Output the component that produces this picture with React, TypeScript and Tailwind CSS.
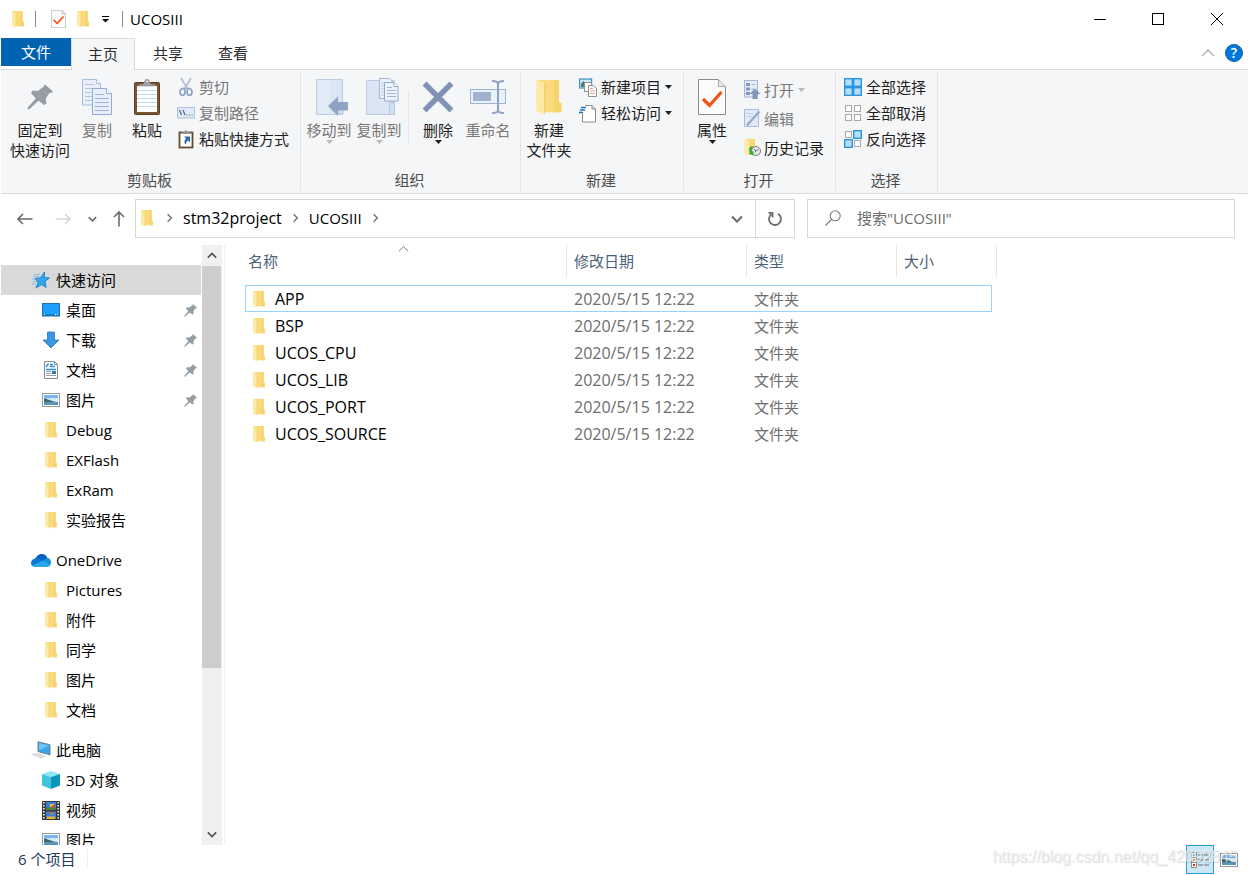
import React from "react";

type IconProps = { className?: string };

/* ---------- icons ---------- */

const FolderIcon = ({ className = "w-4 h-[18px]" }: IconProps) => (
  <svg viewBox="0 0 16 18" preserveAspectRatio="none" className={className}>
    <path d="M2.500 1h10.100v10.200l1.200.8v4.200H5z" fill="#f9da7c" />
    <path d="M10.500 1h2.100v10.200l1.200.8v4.200h-3.300z" fill="#f6d26a" />
    <path d="M2 1l3.800 1.400V17.600L2 15.400z" fill="#ffe9a6" />
    <path d="M5.800 2.400h.4v14l-.4 1.200z" fill="#ecc565" />
  </svg>
);

const PinIcon = ({ className = "w-[13px] h-[13px]" }: IconProps) => (
  <svg viewBox="0 0 26 26" className={className} fill="#939ea5">
    <path d="M17.500 0L26 7.500l-2 1.600-1.400-.3-3.800 5.600.7 5.200-2.400 1.500-5.600-4.300L2 25.500.4 25l.3-1.600 8-9L4 9l1.500-2.400 5.200.4L17 2.500z" />
  </svg>
);

const CopyIcon = () => (
  <svg viewBox="0 0 32 38" className="w-8 h-[38px]">
    <path d="M1.500 1.500h14l4 4v21.500h-18z" fill="#e8effa" stroke="#a9bbda" />
    <path d="M15.500 1.500v4h4" fill="#fff" stroke="#a9bbda" />
    <path d="M4 6.500h9M4 10.500h13M4 14.500h7M4 18.500h7M4 22.500h7" stroke="#b6c5de" />
    <path d="M11.500 10.500h14l5 5v21h-19z" fill="#e6eefa" stroke="#93a9cf" />
    <path d="M25.500 10.500v5h5" fill="#fff" stroke="#93a9cf" />
    <path d="M14 16.500h9M14 20.500h14M14 24.500h14M14 28.500h14M14 32.500h14" stroke="#a3b5d4" />
  </svg>
);

const PasteIcon = () => (
  <svg viewBox="0 0 28 38" className="w-7 h-[38px]">
    <rect x="1.500" y="4.500" width="25" height="32" rx="1" fill="#7b5533" stroke="#5b3e26" />
    <rect x="4" y="8" width="20" height="26" fill="#fff" />
    <path d="M4 12.500h20M4 16.500h20M4 20.500h20M4 24.500h20M4 28.500h20" stroke="#bcdcf0" />
    <path d="M6 8V6.500h4l1.500-2.500h5L18 6.500h4V8z" fill="#a5a9ad" stroke="#7f8488" strokeWidth="0.6" />
    <circle cx="14" cy="3.500" r="2.500" fill="#94989c" />
    <circle cx="14" cy="3.500" r="0.9" fill="#fff" />
  </svg>
);

const CutIcon = () => (
  <svg viewBox="0 0 18 20" className="w-[18px] h-5" fill="none">
    <path d="M4 1l6.500 11M14 1L7.500 12" stroke="#b5c0d2" strokeWidth="1.8" />
    <path d="M7.500 11.500c-2-.5-4.500.8-4.500 3.500 0 2 1 3.300 2.600 3.300S8 17 8 15zM10.500 11.500c2-.5 4.500.8 4.500 3.500 0 2-1 3.300-2.600 3.300S10 17 10 15z" stroke="#93a6c6" strokeWidth="1.8" />
  </svg>
);

const CopyPathIcon = () => (
  <svg viewBox="0 0 18 12" className="w-[18px] h-3">
    <rect x="0.500" y="0.500" width="17" height="10.500" fill="#dfe9f7" stroke="#b0c2de" />
    <path d="M2.500 3l2 5M6 3l2 5" stroke="#51678f" strokeWidth="1.200" />
    <path d="M9.500 8h1M12 8h1M14.500 8h1" stroke="#51678f" strokeWidth="1.200" />
  </svg>
);

const PasteShortcutIcon = () => (
  <svg viewBox="0 0 18 20" className="w-[18px] h-5">
    <rect x="2.500" y="3.500" width="13" height="15" fill="#fff" stroke="#6b4a2c" strokeWidth="1.800" />
    <path d="M5 5V3h2.500l.5-1.500h2L10.500 3H13v2z" fill="#8f9398" />
    <path d="M7 7.500h6v6l-2-2c-1.600 1-2 2-1.800 4C7 14.500 6.800 12 9 9.500z" fill="#2d69ac" />
  </svg>
);

const MoveToIcon = () => (
  <svg viewBox="-6 0 40 38" className="w-10 h-[38px]">
    <path d="M1.500 1.500h26v35h-26z" fill="#dbe5f4" stroke="#bccbe3" />
    <path d="M2 2h13v34H2z" fill="#e3ebf7" />
    <path d="M24 25.500h4V36h-4z" fill="#d0def0" stroke="#b8c9e2" />
    <path d="M13 28l10-9.500V24h10v8.500H23V38z" fill="#8fa3c5" />
  </svg>
);

const CopyToIcon = () => (
  <svg viewBox="-6 0 40 38" className="w-10 h-[38px]">
    <path d="M1.500 2.500h28v34h-28z" fill="#dbe5f4" stroke="#bccbe3" />
    <path d="M24.500 24.500h5v12h-5z" fill="#d0def0" stroke="#b8c9e2" />
    <path d="M14.500.5h10l3 3v17h-13z" fill="#edf3fb" stroke="#a3b5d3" />
    <path d="M16 5h6M16 8h4M16 11h3M16 14h3M16 17h3" stroke="#b6c5de" />
    <path d="M19.500 4.500h9.500l4 4V23H19.500z" fill="#edf3fb" stroke="#93a9cf" />
    <path d="M29 4.500v4h4" fill="#fff" stroke="#93a9cf" />
    <path d="M22 9.500h5M22 12.500h9M22 15.500h9M22 18.500h9" stroke="#a3b5d4" />
  </svg>
);

const DeleteIcon = () => (
  <svg viewBox="0 0 32 36" className="w-8 h-9" fill="none">
    <path d="M2.500 4.500l27 27M29.500 4.500l-27 27" stroke="#8093b4" strokeWidth="5.500" />
  </svg>
);

const RenameIcon = () => (
  <svg viewBox="0 0 36 36" className="w-9 h-9" fill="none">
    <rect x="0.500" y="10.500" width="35" height="14" fill="#e9f1fb" stroke="#9fb3d6" />
    <rect x="3" y="13" width="18" height="9" fill="#a1b2cf" />
    <path d="M22 2c3 0 6 .5 6 3v26c0 2.500-3 3-6 3M34 2c-3 0-6 .5-6 3M34 34c-3 0-6-.5-6-3" stroke="#8ea2c3" strokeWidth="2" />
  </svg>
);

const NewItemIcon = () => (
  <svg viewBox="0 0 18 19" className="w-[18px] h-[19px]" fill="none">
    <rect x="0.600" y="1" width="12" height="9" fill="#cfe9f5" stroke="#3d94bd" strokeWidth="1.200" />
    <path d="M2 9V5.500L4.500 3 6 5v4z" fill="#4d8070" />
    <rect x="5.500" y="4.500" width="7" height="9" fill="#fff" stroke="#8d9296" />
    <path d="M9.500 7.500h5l3 3v8h-8z" fill="#fff" stroke="#8d9296" />
    <path d="M11 10.500h3M11 13h5M11 15.500h5" stroke="#e8a09a" />
  </svg>
);

const EasyAccessIcon = () => (
  <svg viewBox="0 0 18 19" className="w-[18px] h-[19px]" fill="none">
    <path d="M3.500 1.500h9.500l3.500 3.500v13H3.500z" fill="#fff" />
    <path d="M6 1.500h7l3.500 3.500v13H3.500V10" stroke="#888d91" />
    <path d="M13 1.500V5h3.500" stroke="#888d91" />
    <path d="M2 3.500h5M1 6h5M0 8.500h4" stroke="#1673b8" strokeWidth="1.300" />
  </svg>
);

const PropertiesIcon = ({ className = "w-7 h-9" }: IconProps) => (
  <svg viewBox="0 0 28 36" preserveAspectRatio="none" className={className} fill="none">
    <path d="M.5.500h20l7 7v28H.5z" fill="#fbfbfb" stroke="#8c8c8c" />
    <path d="M20.500.500v7h7" fill="#e6e6e6" stroke="#a8a8a8" />
    <path d="M5 20l6.500 6.500L23.500 13" stroke="#ee5415" strokeWidth="3.200" />
  </svg>
);

const OpenIcon = () => (
  <svg viewBox="0 0 17 19" className="w-[17px] h-[19px]">
    <rect x="0.500" y="0.500" width="13" height="16.500" fill="#e4ecf8" stroke="#a4b6d6" />
    <path d="M2 3h4v3H2zM2 7.500h4v3H2zM2 12h4v3H2z" fill="#8498bd" />
    <path d="M7.500 4.500h4M7.500 9h3" stroke="#9db0d0" />
    <path d="M11 8.500l5.500 5.500h-3v5h-5v-5h-3z" fill="#8498bd" />
  </svg>
);

const EditIcon = () => (
  <svg viewBox="0 0 17 19" className="w-[17px] h-[19px]" fill="none">
    <path d="M.5.500h14v17H.5z" fill="#dfe9f7" stroke="#a9bbda" />
    <path d="M2.500 4.500h7M2.500 7.500h6" stroke="#c6d4ea" />
    <path d="M15.500 2.500L5 14l-2 2.500" stroke="#93a7c9" strokeWidth="2.200" />
  </svg>
);

const HistoryIcon = () => (
  <svg viewBox="0 0 17 19" className="w-[17px] h-[19px]" fill="none">
    <path d="M2 1h9v16H4z" fill="#f8d775" />
    <path d="M.5 1L5 2.500v15L.5 15.500z" fill="#ffe9a6" />
    <circle cx="12" cy="13" r="4.500" fill="#e6e6e6" stroke="#777c80" />
    <path d="M10 11l2 2 2.500-1.500M12 13l-1.500 1.500" stroke="#555" strokeWidth="0.8" />
    <path d="M9.500 8C5.500 8 4 11 6 14.500l-1.500 1 5 2-.3-4.500-1.500.8C7 11.500 8 10 9.500 8z" fill="#2fae3d" />
  </svg>
);

const SelectIcon = ({ on }: { on: boolean[] }) => {
  const spots = [
    [0.7, 0.7],
    [9.7, 0.7],
    [0.7, 9.7],
    [9.7, 9.7],
  ];
  return (
    <svg viewBox="0 0 18 18" className="w-[18px] h-[18px]">
      {spots.map(([x, y], i) =>
        on[i] ? (
          <rect key={i} x={x} y={y} width="7.600" height="7.600" fill="#b3dffb" stroke="#2e93dd" strokeWidth="1.400" />
        ) : (
          <rect key={i} x={x + 0.8} y={y + 0.8} width="6" height="6" fill="#fff" stroke="#a8a8a8" />
        )
      )}
    </svg>
  );
};

const Caret = ({ className = "text-[#1e1e1e]" }: IconProps) => (
  <svg viewBox="0 0 7 4" className={`w-[7px] h-1 ${className}`}>
    <path d="M0 0h7L3.500 4z" fill="currentColor" />
  </svg>
);

const Chevron = ({ className = "" }: IconProps) => (
  <svg viewBox="0 0 12 8" className={className} fill="none" stroke="currentColor">
    <path d="M1 1.500L6 6.500l5-5" />
  </svg>
);

const StarIcon = () => (
  <svg viewBox="0 0 18 18" className="w-[18px] h-[18px]">
    <path d="M2 3.500h6M1 5.500h6M0 8h4M1 10.500h4M0 13h4" stroke="#6fb9e6" strokeWidth="0.800" />
    <path d="M12.500 1l-.2 5.300 5.200.7-4.300 3.200 1 6.300-4.700-2.800-5.500 3.300 2.200-6L3 7.500l5.500-.8z" fill="#31a5ee" stroke="#1979bb" strokeWidth="0.8" />
  </svg>
);

const DesktopIcon = () => (
  <svg viewBox="0 0 18 14" className="w-[18px] h-3.5">
    <rect x="0.500" y="0.500" width="17" height="12.500" fill="#1c9ffc" stroke="#1475bb" />
    <path d="M1 12h16" stroke="#0f5f9e" />
    <path d="M2 11.500h1M13 11.500h1M15 11.500h1" stroke="#fff" />
  </svg>
);

const DownloadIcon = () => (
  <svg viewBox="0 0 18 18" className="w-[18px] h-[18px]">
    <path d="M5.500 1h7v8H17l-8 8-8-8h4.500z" fill="#3a97e4" stroke="#2879bd" strokeWidth="0.800" />
  </svg>
);

const DocumentIcon = () => (
  <svg viewBox="0 0 18 18" className="w-[18px] h-[18px]" fill="none">
    <path d="M2.500.5h10l3 3v14h-13z" fill="#fff" stroke="#858b8f" />
    <path d="M12.500.5v3h3" stroke="#858b8f" />
    <path d="M4 6l2.500-3.500M8 3.500h3M8 5.500h5M4 8.500h10" stroke="#2b8fd4" strokeWidth="1.300" />
    <path d="M4 10.500h5M4 12.500h5M4 14.500h10" stroke="#8fa2b0" />
    <path d="M10 10h4v3h-4z" fill="#3c78a8" />
  </svg>
);

const PictureIcon = () => (
  <svg viewBox="0 0 18 14" className="w-[18px] h-3.5 shrink-0">
    <rect x="0.500" y="0.500" width="17" height="13" fill="#fff" stroke="#9a9a9a" />
    <path d="M2 2h14v5H2z" fill="#7ab5ec" />
    <path d="M5 5h11v4H5z" fill="#d3e8f6" />
    <path d="M2 5.500c4 .5 6 2.500 12 3.500H2z" fill="#3b6b63" />
    <path d="M2 9h14v3H2z" fill="#5a94bd" />
  </svg>
);

const CloudIcon = () => (
  <svg viewBox="0 0 20 13" className="w-5 h-[13px]">
    <path d="M4 5.500C5 2 8 0 11 0c2.500 0 4.500 1.500 5.500 4l-5 4z" fill="#0364b8" />
    <path d="M4.500 4.500C1.500 4.800 0 6.700 0 9c0 1.300.5 2.300 1.300 3L13 7.500 8 4.500z" fill="#0f78d4" />
    <path d="M12 7l4-3c2.500 0 4 2 4 4.500 0 1-.3 2-1 2.800z" fill="#1490df" />
    <path d="M1.300 12L12 6.500l7.300 4.800c-.8 1-1.800 1.700-3.300 1.700H4c-1.200 0-2-.3-2.700-1z" fill="#28a8ea" />
  </svg>
);

const ComputerIcon = () => (
  <svg viewBox="0 0 20 18" className="w-5 h-[18px]">
    <path d="M7 .8l12 3v10L7 10.500z" fill="#37a6f1" stroke="#6d7a83" />
    <path d="M8 2l10 2.500-10 5z" fill="#8ccff8" opacity="0.7" />
    <path d="M0 13.500l6-1.500 9 3-5 2.500z" fill="#c9ced2" />
    <path d="M2 13.700l9 2.500M5 12.800l8 2.400" stroke="#fff" strokeWidth="0.600" />
  </svg>
);

const CubeIcon = () => (
  <svg viewBox="0 0 18 18" className="w-[18px] h-[18px]">
    <path d="M9 0l9 3-9 3-9-3z" fill="#8ce6f2" />
    <path d="M0 3l9 3v12l-9-3.500z" fill="#3fc4dc" />
    <path d="M18 3L9 6v12l9-3.500z" fill="#0a93bd" />
  </svg>
);

const VideoIcon = () => (
  <svg viewBox="0 0 18 19" className="w-[18px] h-[19px]">
    <path d="M0 0h18v19H0z" fill="#3a3a3a" />
    <path d="M1.800 1v18M16.200 1v18" stroke="#e8e8e8" strokeWidth="1.600" strokeDasharray="1.600 1.400" />
    <path d="M4 1h10v8H4zM4 10.500h10V18H4z" fill="#3d7de0" />
    <path d="M8 3h4v3H8z" fill="#f0c330" />
    <path d="M4 6.500h10V9H4z" fill="#52833c" />
    <circle cx="11" cy="5.500" r="1.500" fill="#d94b36" />
    <path d="M7 11h5l-2.500 3zM5 15.500h8V18H5z" fill="#e9b431" />
    <path d="M8 11h3v1.500H8z" fill="#d94b36" />
  </svg>
);

/* ---------- ribbon parts ---------- */

type BigButtonProps = {
  icon: React.ReactNode;
  lines: string[];
  caret?: boolean;
  disabled?: boolean;
  wide?: boolean;
};

const BigButton = ({ icon, lines, caret, disabled, wide }: BigButtonProps) => (
  <button
    disabled={disabled}
    className={`${wide ? "w-16" : "w-[50px]"} ${
      disabled ? "text-[#787878]" : "text-[#1e1e1e]"
    } flex flex-col items-center shrink-0 pt-1.5 text-[15px] leading-5 whitespace-nowrap`}
  >
    <span className="h-[38px] mb-1 flex items-center justify-center">{icon}</span>
    {lines.map((line) => (
      <span key={line}>{line}</span>
    ))}
    {caret && <Caret className={disabled ? "text-[#b8b8b8]" : "text-[#1e1e1e]"} />}
  </button>
);

type SmallButtonProps = {
  icon: React.ReactNode;
  label: string;
  caret?: boolean;
  disabled?: boolean;
  tall?: boolean;
};

const SmallButton = ({ icon, label, caret, disabled, tall }: SmallButtonProps) => (
  <button
    disabled={disabled}
    className={`${tall ? "h-[29px]" : "h-[26px]"} ${
      disabled ? "text-[#787878]" : "text-[#1e1e1e]"
    } flex items-center text-[15px] leading-5 whitespace-nowrap`}
  >
    <span className={`${tall ? "w-5" : "w-[22px]"} shrink-0`}>{icon}</span>
    {label}
    {caret && (
      <span className="ml-1">
        <Caret className={disabled ? "text-[#b8b8b8]" : "text-[#1e1e1e]"} />
      </span>
    )}
  </button>
);

type GroupProps = { label: string; width: string; children: React.ReactNode };

const RibbonGroup = ({ label, width, children }: GroupProps) => (
  <section
    aria-label={label}
    className={`${width} shrink-0 my-0.5 border-r border-[#e2e3e4] flex flex-col justify-between`}
  >
    <div className="flex items-start">{children}</div>
    <p className="text-center text-[15px] leading-5 text-[#4c4c4c] pb-px pr-0.5">{label}</p>
  </section>
);

/* ---------- data ---------- */

const folder = <FolderIcon />;

const navGroups = [
  {
    title: "快速访问",
    icon: <StarIcon />,
    selected: true,
    items: [
      { label: "桌面", icon: <DesktopIcon />, pinned: true },
      { label: "下载", icon: <DownloadIcon />, pinned: true },
      { label: "文档", icon: <DocumentIcon />, pinned: true },
      { label: "图片", icon: <PictureIcon />, pinned: true },
      { label: "Debug", icon: folder },
      { label: "EXFlash", icon: folder },
      { label: "ExRam", icon: folder },
      { label: "实验报告", icon: folder },
    ],
  },
  {
    title: "OneDrive",
    icon: <CloudIcon />,
    items: [
      { label: "Pictures", icon: folder },
      { label: "附件", icon: folder },
      { label: "同学", icon: folder },
      { label: "图片", icon: folder },
      { label: "文档", icon: folder },
    ],
  },
  {
    title: "此电脑",
    icon: <ComputerIcon />,
    items: [
      { label: "3D 对象", icon: <CubeIcon /> },
      { label: "视频", icon: <VideoIcon /> },
      { label: "图片", icon: <PictureIcon /> },
    ],
  },
];

const files = ["APP", "BSP", "UCOS_CPU", "UCOS_LIB", "UCOS_PORT", "UCOS_SOURCE"];

/* ---------- sections ---------- */

const TitleBar = () => (
  <header className="h-[38px] shrink-0 flex items-center pr-px text-black">
    <div className="flex items-center pl-[9px]">
      <FolderIcon className="w-4 h-[18px]" />
      <span className="w-px h-4 bg-[#8a8a8a] ml-[9px]" />
      <button aria-label="属性" className="ml-[15px]">
        <PropertiesIcon className="w-[15px] h-[18px]" />
      </button>
      <button aria-label="新建文件夹" className="ml-[9px]">
        <FolderIcon className="w-4 h-[18px]" />
      </button>
      <button aria-label="自定义快速访问工具栏" className="ml-[11px]">
        <svg viewBox="0 0 7 7" className="w-[7px] h-[7px]">
          <path d="M0 .5h7" stroke="#000" />
          <path d="M0 3h7L3.500 6.500z" />
        </svg>
      </button>
      <span className="w-px h-4 bg-[#8a8a8a] ml-[13px]" />
      <h1 className="ml-[7px] text-[15px] leading-5">UCOSIII</h1>
    </div>
    <div className="ml-auto flex h-full">
      <button aria-label="最小化" className="w-[58px] flex items-center justify-center">
        <span className="w-3 h-px bg-black" />
      </button>
      <button aria-label="最大化" className="w-[58px] flex items-center justify-center">
        <span className="w-3 h-3 border border-black" />
      </button>
      <button aria-label="关闭" className="w-[60px] flex items-center justify-center">
        <svg viewBox="0 0 12 12" className="w-3 h-3" stroke="#000">
          <path d="M0 0l12 12M12 0L0 12" />
        </svg>
      </button>
    </div>
  </header>
);

const Tabs = () => (
  <nav className="h-8 shrink-0 flex text-[15px] leading-5 text-[#2b2b2b]">
    <div className="border-b border-[#dadbdc] flex items-start">
      <button className="w-[70px] h-7 bg-[#0063b1] text-white">文件</button>
    </div>
    <button className="w-16 pb-0.5 bg-[#f5f6f7] border border-b-0 border-[#dadbdc]">主页</button>
    <button className="w-[66px] pb-0.5 border-b border-[#dadbdc]">共享</button>
    <button className="w-16 pb-0.5 border-b border-[#dadbdc]">查看</button>
    <div className="flex-1 pb-0.5 border-b border-[#dadbdc] flex items-center justify-end gap-2.5 pr-[5px]">
      <button aria-label="最小化功能区" className="text-[#a0a0a0]">
        <Chevron className="w-3.5 h-2.5 rotate-180" />
      </button>
      <button
        aria-label="帮助"
        className="w-[18px] h-[18px] rounded-full bg-[#0078d7] border border-[#0a62ad] text-white text-sm leading-4 font-semibold"
      >
        ?
      </button>
    </div>
  </nav>
);

const Ribbon = () => (
  <div className="h-[124px] shrink-0 flex bg-[#f5f6f7] border-b border-[#dadbdc] overflow-hidden">
    <RibbonGroup label="剪贴板" width="w-[300px]">
      <div className="flex pl-[7px]">
        <BigButton wide icon={<PinIcon className="w-[26px] h-[26px]" />} lines={["固定到", "快速访问"]} />
        <BigButton disabled icon={<CopyIcon />} lines={["复制"]} />
        <BigButton icon={<PasteIcon />} lines={["粘贴"]} />
      </div>
      <div className="pt-0.5 pl-[5px]">
        <SmallButton disabled icon={<CutIcon />} label="剪切" />
        <SmallButton disabled icon={<CopyPathIcon />} label="复制路径" />
        <SmallButton icon={<PasteShortcutIcon />} label="粘贴快捷方式" />
      </div>
    </RibbonGroup>
    <RibbonGroup label="组织" width="w-[220px]">
      <div className="flex pl-[3px]">
        <BigButton disabled caret icon={<MoveToIcon />} lines={["移动到"]} />
        <BigButton disabled caret icon={<CopyToIcon />} lines={["复制到"]} />
        <span className="w-px h-[54px] mt-[19px] mx-1 bg-[#e2e3e4]" />
        <BigButton caret icon={<DeleteIcon />} lines={["删除"]} />
        <BigButton disabled icon={<RenameIcon />} lines={["重命名"]} />
      </div>
    </RibbonGroup>
    <RibbonGroup label="新建" width="w-[163px]">
      <div className="pl-[3px]">
        <BigButton icon={<FolderIcon className="w-[34px] h-[38px]" />} lines={["新建", "文件夹"]} />
      </div>
      <div className="pt-0.5 pl-[5px]">
        <SmallButton caret icon={<NewItemIcon />} label="新建项目" />
        <SmallButton caret icon={<EasyAccessIcon />} label="轻松访问" />
      </div>
    </RibbonGroup>
    <RibbonGroup label="打开" width="w-[152px]">
      <div className="pl-[3px]">
        <BigButton caret icon={<PropertiesIcon />} lines={["属性"]} />
      </div>
      <div className="pt-[3px] pl-[7px]">
        <SmallButton tall disabled caret icon={<OpenIcon />} label="打开" />
        <SmallButton tall disabled icon={<EditIcon />} label="编辑" />
        <SmallButton tall icon={<HistoryIcon />} label="历史记录" />
      </div>
    </RibbonGroup>
    <RibbonGroup label="选择" width="w-[102px]">
      <div className="pt-0.5 pl-2">
        <SmallButton icon={<SelectIcon on={[true, true, true, true]} />} label="全部选择" />
        <SmallButton icon={<SelectIcon on={[false, false, false, false]} />} label="全部取消" />
        <SmallButton icon={<SelectIcon on={[false, true, true, false]} />} label="反向选择" />
      </div>
    </RibbonGroup>
  </div>
);

const Arrow = ({ className = "" }: IconProps) => (
  <svg viewBox="0 0 16 12" className={`w-4 h-3 ${className}`} fill="none" stroke="currentColor" strokeWidth="1.600">
    <path d="M15.500 6H1M6 1L1 6l5 5" />
  </svg>
);

const AddressBar = () => (
  <div className="shrink-0 flex pt-[5px] pr-[13px] pb-[7px] text-base leading-5">
    <div className="w-[134px] shrink-0 flex items-center text-[#6a6a6a]">
      <button aria-label="后退" className="ml-4">
        <Arrow />
      </button>
      <button aria-label="前进" className="ml-[22px] text-[#d6d6d6]">
        <Arrow className="rotate-180" />
      </button>
      <button aria-label="最近浏览的位置" className="ml-[17px]">
        <Chevron className="w-[9px] h-1.5 stroke-2" />
      </button>
      <button aria-label="向上" className="ml-3.5">
        <Arrow className="rotate-90" />
      </button>
    </div>
    <div className="flex-[660_1_660px] h-[39px] flex border border-[#d9d9d9]">
      <ol className="flex flex-1 items-center pl-[3px] pb-0.5 text-black">
        <li>
          <FolderIcon />
        </li>
        <li className="pl-2.5 pr-[9px] text-[#767676]">
          <Chevron className="w-[9px] h-1.5 stroke-2 -rotate-90" />
        </li>
        <li>
          <a href="#stm32project">stm32project</a>
        </li>
        <li className="px-[9px] text-[#767676]">
          <Chevron className="w-[9px] h-1.5 stroke-2 -rotate-90" />
        </li>
        <li>
          <a href="#ucosiii" className="text-[15px]">UCOSIII</a>
        </li>
        <li className="px-[9px] text-[#767676]">
          <Chevron className="w-[9px] h-1.5 stroke-2 -rotate-90" />
        </li>
      </ol>
      <button aria-label="上一个位置" className="w-9 flex items-center justify-center text-[#6a6a6a]">
        <Chevron className="w-3 h-2 stroke-2" />
      </button>
      <button aria-label="刷新" className="w-[39px] border-l border-[#d9d9d9] flex items-center justify-center text-[#6a6a6a]">
        <svg viewBox="0 0 16 16" className="w-4 h-4" fill="none" stroke="currentColor" strokeWidth="1.800">
          <path d="M11 2.800a6 6 0 1 1-6.500.3" />
          <path d="M1.500 1.900h4v4.500" />
        </svg>
      </button>
    </div>
    <label className="ml-3 flex-[428_1_428px] h-[39px] flex items-center border border-[#d9d9d9] pl-[17px] pb-0.5">
      <svg viewBox="0 0 16 16" className="w-4 h-4 shrink-0" fill="none" stroke="#7a7a7a" strokeWidth="1.100">
        <circle cx="10.200" cy="5.800" r="5" />
        <path d="M6.500 9.500L.5 15.500" />
      </svg>
      <input
        type="text"
        aria-label="搜索"
        placeholder={'搜索"UCOSIII"'}
        className="ml-4 w-full min-w-0 outline-none text-[15px] leading-5 placeholder:text-[#6d6d6d]"
      />
    </label>
  </div>
);

const Sidebar = () => (
  <aside className="w-[224px] shrink-0 flex border-r border-[#f0f0f0] text-[15px] leading-5 text-black">
    <div className="w-[200px] pt-5 overflow-hidden">
      {navGroups.map((group) => (
        <div key={group.title} className="mb-2.5">
          <a
            href="#"
            className={`flex items-center h-[30px] pl-[30px] ${group.selected ? "bg-[#d9d9d9]" : ""}`}
          >
            <span className="w-5 mr-[5px] flex justify-center">{group.icon}</span>
            {group.title}
          </a>
          <ul>
            {group.items.map((item) => (
              <li key={item.label}>
                <a href="#" className="flex items-center h-[30px] pl-10 pr-1">
                  <span className="w-5 mr-[5px] flex justify-center">{item.icon}</span>
                  {item.label}
                  {"pinned" in item && (
                    <span className="ml-auto">
                      <PinIcon />
                    </span>
                  )}
                </a>
              </li>
            ))}
          </ul>
        </div>
      ))}
    </div>
    <div className="ml-px w-5 bg-[#f0f0f0] flex flex-col items-center text-[#505050]">
      <button aria-label="向上滚动" className="h-[21px]">
        <Chevron className="w-2.5 h-[7px] stroke-2 rotate-180" />
      </button>
      <div className="flex-1 w-full">
        <div className="h-[72%] w-[19px] bg-[#cdcdcd]" />
      </div>
      <button aria-label="向下滚动" className="h-[21px]">
        <Chevron className="w-2.5 h-[7px] stroke-2" />
      </button>
    </div>
  </aside>
);

const FileList = () => (
  <main className="flex-1 min-w-0 pl-5">
    <table className="table-fixed w-[747px] text-left text-[15px] leading-5">
      <colgroup>
        <col className="w-[322px]" />
        <col className="w-[180px]" />
        <col className="w-[150px]" />
        <col className="w-[95px]" />
      </colgroup>
      <thead>
        <tr className="h-10 align-top text-[#4c607a]">
          <th className="p-0 font-normal">
            <div className="relative h-8 flex items-center pl-[3px] border-r border-[#e5e5e5]">
              名称
              <Chevron className="absolute left-[153px] top-0 w-[11px] h-2 rotate-180 text-[#707070]" />
            </div>
          </th>
          <th className="p-0 font-normal">
            <div className="h-8 flex items-center pl-[7px] border-r border-[#e5e5e5]">修改日期</div>
          </th>
          <th className="p-0 font-normal">
            <div className="h-8 flex items-center pl-[7px] border-r border-[#e5e5e5]">类型</div>
          </th>
          <th className="p-0 font-normal">
            <div className="h-8 w-[100px] flex items-center pl-[7px] border-r border-[#e5e5e5]">大小</div>
          </th>
        </tr>
      </thead>
      <tbody>
        {files.map((name, index) => (
          <tr
            key={name}
            className={`h-[27px] text-[#6d6d6d] ${index === 0 ? "ring-1 ring-inset ring-[#99d1ff]" : ""}`}
          >
            <td className="p-0 text-base leading-5 text-black">
              <div className="flex items-center pl-1.5">
                <FolderIcon />
                <span className="ml-2">{name}</span>
              </div>
            </td>
            <td className="p-0 pl-[7px] text-base leading-5">2020/5/15 12:22</td>
            <td className="p-0 pl-[7px]">文件夹</td>
            <td className="p-0" />
          </tr>
        ))}
      </tbody>
    </table>
  </main>
);

const StatusBar = () => (
  <footer className="relative h-[30px] shrink-0 flex items-start pr-1 text-[15px] leading-5 text-[#1e395b]">
    <span className="mt-1 pl-[17px] pr-3 border-r border-[#eeeeee]">6 个项目</span>
    <div className="ml-auto flex items-center">
      <button aria-label="详细信息" className="w-7 h-[29px] bg-[#cce8f6] border border-[#26a0da] flex items-center justify-center">
        <svg viewBox="0 0 18 16" className="w-[18px] h-4" fill="none">
          <path d="M.5.5h5v5h-5zM.5 5.500h5v5h-5zM.5 10.500h5v5h-5z" fill="#fff" stroke="#8a8a8a" />
          <path d="M2 2h2v2H2z" fill="#7aa7cc" />
          <path d="M2 7h2v2H2z" fill="#e08a4a" />
          <path d="M2 12h2v2H2z" fill="#c4372b" />
          <path d="M7 3h5M13 3h5M7 8h5M13 8h5M7 13h5M13 13h5" stroke="#6b6b6b" />
        </svg>
      </button>
      <button aria-label="大缩略图" className="w-[30px] flex justify-center">
        <PictureIcon />
      </button>
    </div>
    <span className="absolute right-2.5 top-0.5 font-['Liberation_Sans'] text-base leading-5 text-[#f0f0f0cc] [text-shadow:1px_1px_1px_#00000026] pointer-events-none">
      https://blog.csdn.net/qq_42092845
    </span>
  </footer>
);

const App = () => {
  return (
    <div className="h-screen flex flex-col pl-px bg-white overflow-hidden font-['Open_Sans','Noto_Sans_CJK_SC',sans-serif]">
      <TitleBar />
      <Tabs />
      <Ribbon />
      <AddressBar />
      <div className="flex-1 min-h-0 flex">
        <Sidebar />
        <FileList />
      </div>
      <StatusBar />
    </div>
  );
};

export default App;
